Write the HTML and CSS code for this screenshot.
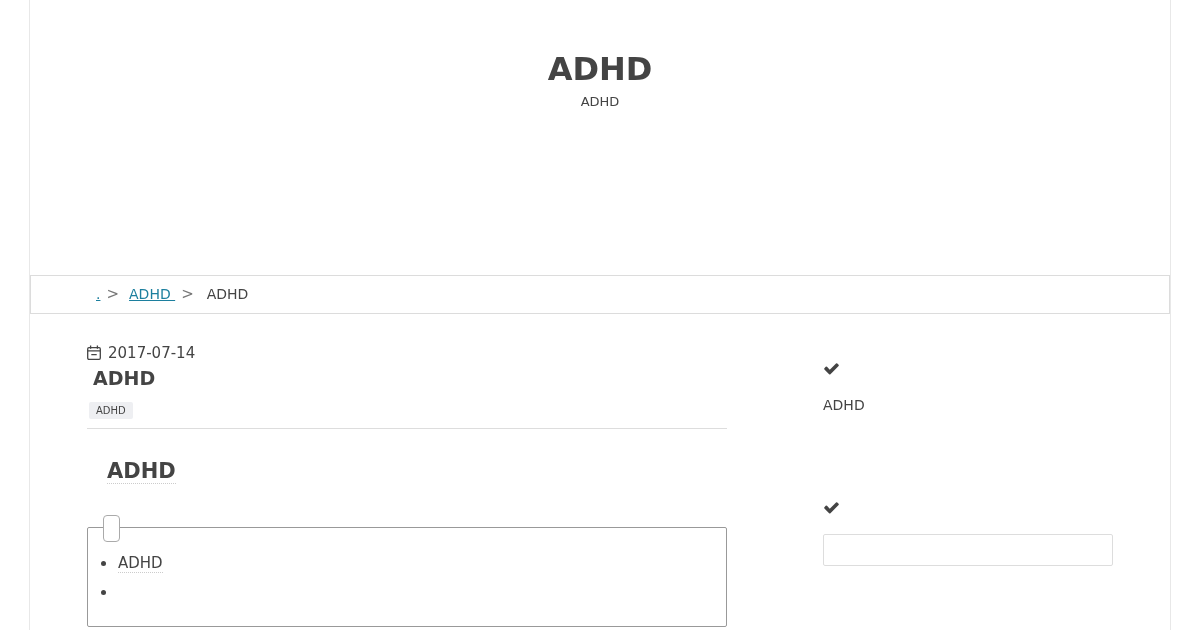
FILE: index.html
```html
<!DOCTYPE html>
<html lang="zh">
<head>
  <meta charset="UTF-8" />
  <meta name="viewport" content="width=device-width, initial-scale=1.0"/>
  <title>ADHD</title>
  <link rel="stylesheet" href="styles.css">
</head>
<body>
<div class="wrapper">
  <header class="hero">
    <h1 class="site-title">ADHD</h1>
    <p class="site-desc">ADHD</p>
  </header>

  <nav class="crumbs">
    <a href="#">.</a>
    <span class="sep">&gt;</span>
    <a href="#">ADHD&nbsp;</a>
    <span class="sep">&gt;</span>
    <span class="current">ADHD</span>
  </nav>

  <div class="content">
    <main class="article">
      <div class="post-date">
        <svg class="cal" width="14" height="15" viewBox="0 0 14 15" fill="none" stroke="#444" stroke-width="1.3">
          <rect x="0.7" y="2.700" width="12.600" height="11.600" rx="1.200"/>
          <path d="M0.700 5.800h12.600M3.600 0.500v3.200M10.400 0.500v3.200M4.300 9.600h5.400"/>
        </svg>
        <span>2017-07-14</span>
      </div>
      <h2 class="post-title">ADHD</h2>
      <div class="tags"><span class="tag">ADHD</span></div>
      <h3 class="section-title"><span>ADHD</span></h3>
      <div class="toc">
        <div class="toc-toggle"></div>
        <ul>
          <li><span class="toc-link">ADHD</span></li>
          <li></li>
        </ul>
      </div>
    </main>

    <aside class="sidebar">
      <section class="widget widget-text">
        <svg class="check" width="17" height="17" viewBox="0 0 1792 1792"><path d="M1671 566q0 40-28 68l-724 724-136 136q-28 28-68 28t-68-28l-136-136-362-362q-28-28-28-68t28-68l136-136q28-28 68-28t68 28l294 295 656-657q28-28 68-28t68 28l136 136q28 28 28 68z" fill="#444"/></svg>
        <p>ADHD</p>
      </section>
      <section class="widget widget-search">
        <svg class="check" width="17" height="17" viewBox="0 0 1792 1792"><path d="M1671 566q0 40-28 68l-724 724-136 136q-28 28-68 28t-68-28l-136-136-362-362q-28-28-28-68t28-68l136-136q28-28 68-28t68 28l294 295 656-657q28-28 68-28t68 28l136 136q28 28 28 68z" fill="#444"/></svg>
        <input class="search" type="text">
      </section>
      <section class="widget">
        <svg class="check" width="17" height="17" viewBox="0 0 1792 1792"><path d="M1671 566q0 40-28 68l-724 724-136 136q-28 28-68 28t-68-28l-136-136-362-362q-28-28-28-68t28-68l136-136q28-28 68-28t68 28l294 295 656-657q28-28 68-28t68 28l136 136q28 28 28 68z" fill="#444"/></svg>
      </section>
    </aside>
  </div>
</div>
</body>
</html>
```

FILE: styles.css
```css
html, body {
  height: 630px;
  overflow: hidden;
}

body {
  margin: 0;
  background: #fff;
  color: #444;
  font-family: "DejaVu Sans", sans-serif;
  font-size: 14px;
}

.wrapper {
  width: 1142px;
  margin: 0 auto;
  box-sizing: border-box;
  min-height: 630px;
  border-left: 1px solid #e8e8e8;
  border-right: 1px solid #e8e8e8;
  will-change: transform;
}

.hero {
  height: 275px;
  box-sizing: border-box;
  padding-top: 50px;
  text-align: center;
}

.site-title {
  margin: 0;
  font-size: 32px;
  line-height: 38px;
  font-weight: bold;
}

.site-desc {
  margin: 6px 0 0;
  font-size: 13px;
  line-height: 16px;
}

.crumbs {
  display: flex;
  align-items: center;
  height: 39px;
  box-sizing: border-box;
  padding: 0 0 2px 65px;
  border: 1px solid #dcdcdc;
  line-height: 20px;
}

.crumbs a {
  color: #1c7f9e;
  text-decoration: underline;
}

.sep {
  margin: 0 10px 0 6px;
  color: #777;
  font-size: 15px;
}

.current {
  margin-left: 3px;
}

.content {
  display: flex;
  padding: 30px 57px 0;
  gap: 96px;
}

.article {
  width: 640px;
}

.post-date {
  display: flex;
  align-items: center;
  gap: 7px;
  height: 18px;
  font-size: 15px;
}

.cal {
  margin-top: -2px;
}

.post-title {
  margin: 5px 0 0 6px;
  font-size: 19px;
  line-height: 22px;
}

.tags {
  margin-top: 13px;
  padding: 0 0 9px 2px;
  border-bottom: 1px solid #ddd;
  line-height: 0;
}

.tag {
  display: inline-block;
  padding: 0 7px;
  background: #eeeff2;
  border-radius: 2px;
  font-size: 10px;
  line-height: 17px;
}

.section-title {
  margin: 29px 0 0 20px;
  font-size: 21px;
  line-height: 27px;
}

.section-title span {
  border-bottom: 1px dotted #ccc;
}

.toc {
  position: relative;
  box-sizing: border-box;
  height: 100px;
  margin-top: 42px;
  border: 1px solid #999;
  border-radius: 2px;
}

.toc-toggle {
  position: absolute;
  top: -13px;
  left: 15px;
  width: 15px;
  height: 25px;
  background: #fff;
  border: 1px solid #aaa;
  border-radius: 4px;
}

.toc ul {
  margin: 20px 0 0;
  padding: 0 0 0 30px;
  font-size: 15px;
}

.toc li {
  height: 29px;
  line-height: 29px;
}

.toc li::marker {
  font-size: 17px;
}

.toc-link {
  border-bottom: 1px dotted #ccc;
}

.sidebar {
  width: 290px;
  padding-top: 16px;
}

.widget {
  margin: 0;
}

.check {
  display: block;
}

.widget-text {
  height: 139px;
}

.widget-text p {
  margin: 18px 0 0;
  line-height: 20px;
}

.widget-search {
  height: 129px;
}

.search {
  display: block;
  width: 100%;
  height: 32px;
  box-sizing: border-box;
  margin-top: 18px;
  background: #fff;
  border: 1px solid #ddd;
  border-radius: 2px;
}
```
